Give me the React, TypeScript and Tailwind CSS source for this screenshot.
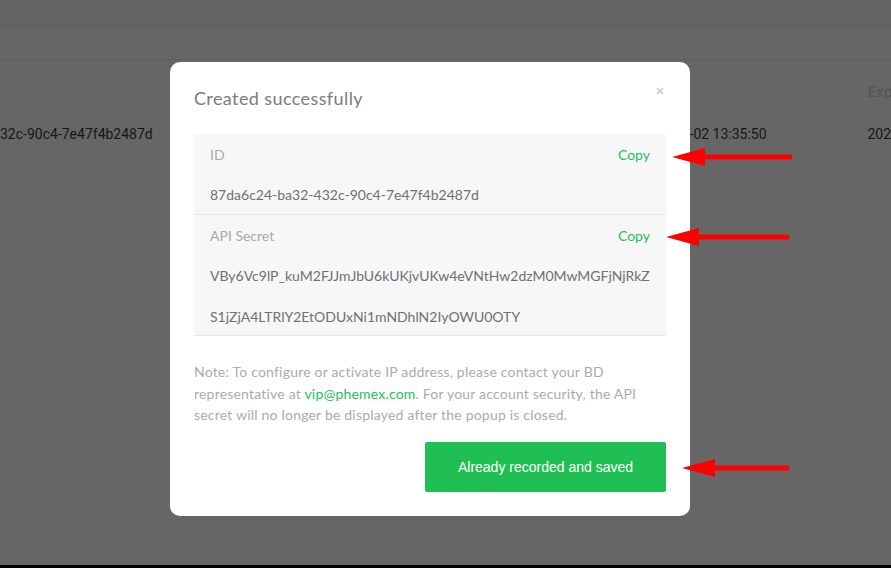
import React from "react";

function Arrow({ y, tip, end }: { y: number; tip: number; end: number }) {
  const base = tip + 33;
  return (
    <svg className="absolute left-0 top-0" width={891} height={568} style={{ pointerEvents: "none" }}>
      <line x1={base - 4} y1={y} x2={end} y2={y} stroke="#ff0000" strokeWidth={5} strokeLinecap="round" />
      <polygon points={`${tip},${y} ${base},${y - 9} ${base},${y + 9}`} fill="#ff0000" />
    </svg>
  );
}

export default function App() {
  return (
    <div className="relative w-[891px] h-[568px] overflow-hidden bg-[#666666]" style={{ fontFamily: "Lato, 'Noto Sans', sans-serif" }}>
      <div className="flex flex-col h-full">
        <div className="h-[30px] bg-[#636363]" />
        <div className="h-[30px] bg-[#676767] border-b border-[#5d5d5d]" />
        <div className="relative flex-1 font-['Roboto',sans-serif] text-[14px]">
          <div className="flex h-[42px] items-end">
            <span className="ml-[868px] text-[#545454] leading-[20px] text-[15px]">Exp</span>
          </div>
          <div className="flex items-center h-[64px] text-[#161616]">
            <span className="w-[690px]">32c-90c4-7e47f4b2487d</span>
            <span className="w-[178px]">-02 13:35:50</span>
            <span>202</span>
          </div>
        </div>
        <div className="h-[3px] bg-black" />
      </div>

      {/* Modal */}
      <div className="absolute left-[170px] top-[62px] w-[520px] h-[454px] bg-white rounded-[10px] px-6 pt-[24px] flex flex-col">
        <div className="text-[18px] leading-[24px] tracking-[0.4px] text-[#7c7c7c]">Created successfully</div>
        <svg className="absolute right-[26px] top-[25px]" width="8" height="8" viewBox="0 0 8 8">
          <path d="M1 1L7 7M7 1L1 7" stroke="#c8c8c8" strokeWidth="1.6" />
        </svg>

        <div className="mt-[24px] text-[14px]">
          <div className="h-[81px] bg-[#f7f7f7] border-b border-[#e6e6e6] px-4">
            <div className="h-[40px] flex items-center justify-between">
              <span className="text-[#a9a9a9]">ID</span>
              <span className="text-[#22c05a]">Copy</span>
            </div>
            <div className="leading-[41px] text-[#707070]">87da6c24-ba32-432c-90c4-7e47f4b2487d</div>
          </div>
          <div className="h-[121px] bg-[#f7f7f7] border-b border-[#e6e6e6] px-4">
            <div className="h-[40px] flex items-center justify-between">
              <span className="text-[#a9a9a9]">API Secret</span>
              <span className="text-[#22c05a]">Copy</span>
            </div>
            <div className="leading-[41px] text-[#707070]">VBy6Vc9lP_kuM2FJJmJbU6kUKjvUKw4eVNtHw2dzM0MwMGFjNjRkZ</div>
            <div className="leading-[41px] text-[#707070]">S1jZjA4LTRlY2EtODUxNi1mNDhlN2IyOWU0OTY</div>
          </div>
        </div>

        <p className="mt-[25px] text-[14px] leading-[21.5px] tracking-[0.2px] text-[#ababab]">
          Note: To configure or activate IP address, please contact your BD representative at{" "}
          <span className="text-[#22c05a]">vip@phemex.com</span>. For your account security, the API secret will no longer be displayed after the popup is closed.
        </p>

        <div className="mt-auto mb-[24px] flex justify-end">
          <button className="w-[241px] h-[50px] rounded-[2px] bg-[#1fbf54] text-white text-[14px] font-['Liberation_Sans',sans-serif]">
            Already recorded and saved
          </button>
        </div>
      </div>

      <Arrow y={157} tip={672} end={790} />
      <Arrow y={237} tip={666} end={787} />
      <Arrow y={468} tip={682} end={787} />
    </div>
  );
}
